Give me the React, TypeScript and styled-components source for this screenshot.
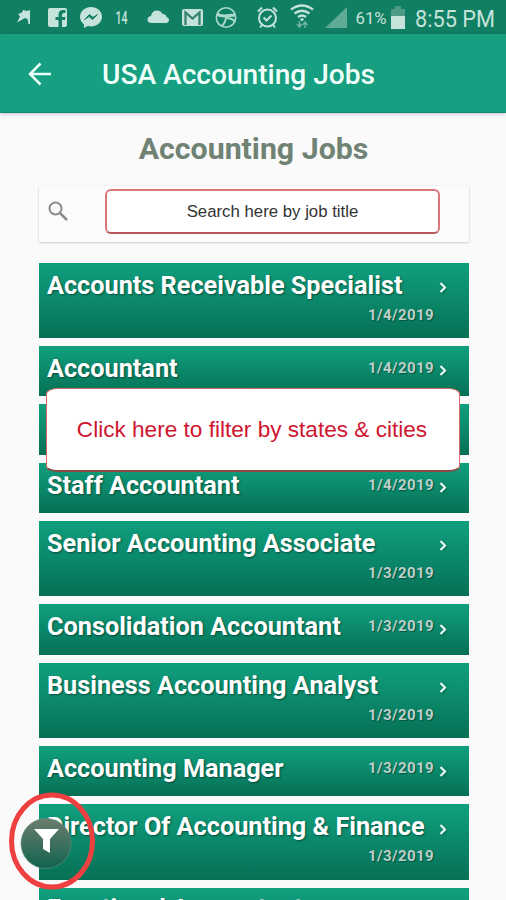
import React from "react";
import styled, { createGlobalStyle } from "styled-components";

const Global = createGlobalStyle`
  * { box-sizing: border-box; }
  html, body { margin: 0; padding: 0; overflow: hidden; background: #fafafa; }
  body { font-family: Roboto, "Liberation Sans", sans-serif; }
`;

const Screen = styled.div`
  position: relative;
  width: 506px;
  height: 900px;
  overflow: hidden;
  background: #fafafa;
`;

const StatusBar = styled.div`
  height: 34px;
  background: #107f63;
  color: #c5e3da;
`;

const StatusArt = styled.svg`
  display: block;
  width: 506px;
  height: 34px;
`;

const AppBar = styled.header`
  height: 79px;
  display: flex;
  align-items: center;
  padding-left: 28px;
  background: #169f80;
  border-bottom: 1px solid #128a6e;
  box-shadow: 0 1px 4px rgba(60, 40, 70, 0.25);
`;

const BackIcon = styled.svg`
  width: 24px;
  height: 24px;
  margin-top: 1px;
`;

const BarTitle = styled.h1`
  margin: 4px 0 0 50px;
  font-size: 28.1px;
  font-weight: 500;
  line-height: 32px;
  color: #f0fffb;
  white-space: nowrap;
`;

const Heading = styled.h2`
  margin: 20px 0 0;
  height: 32px;
  padding-left: 1px;
  text-align: center;
  font-size: 30.3px;
  font-weight: 700;
  line-height: 32px;
  color: #6f8273;
`;

const SearchBox = styled.div`
  width: 430px;
  height: 56px;
  margin: 21px 0 0 39px;
  padding: 3px 0 0 8px;
  display: flex;
  background: #fbfbfb;
  box-shadow: 0 1px 2px rgba(0, 0, 0, 0.16), 0 0 1px rgba(0, 0, 0, 0.12);
`;

const SearchIcon = styled.svg`
  width: 23px;
  height: 23px;
  margin-top: 11px;
`;

const SearchHint = styled.div`
  width: 335px;
  height: 45px;
  margin-left: 35px;
  border: 2px solid #d9777a;
  border-bottom: 2px solid #b5565b;
  border-radius: 6px;
  background: #fff;
  color: #333;
  font-family: "Liberation Sans", sans-serif;
  font-size: 16.8px;
  line-height: 42px;
  text-align: center;
`;

const List = styled.div`
  display: flex;
  flex-direction: column;
  gap: 8px;
  margin: 20.6px 0 0 39px;
  width: 430px;
`;

const Row = styled.div<{ $tall?: boolean }>`
  flex: none;
  height: ${(p) => (p.$tall ? 75.35 : 50.35)}px;
  padding: 7px 19px 0 8px;
  display: grid;
  grid-template-columns: minmax(0, 1fr) 70px 14px;
  column-gap: 2px;
  grid-template-rows: ${(p) => (p.$tall ? "31px 29px" : "31px")};
  background: linear-gradient(#10a07e, #067056);

  &:last-child {
    padding-top: 5px;
  }
`;

const JobTitle = styled.div<{ $tall?: boolean }>`
  grid-column: 1 / ${(p) => (p.$tall ? 3 : 2)};
  grid-row: 1;
  font-size: 25.25px;
  font-weight: 700;
  line-height: 32px;
  white-space: nowrap;
  color: #fff;
  text-shadow: 1px 1px 2px rgba(0, 40, 30, 0.6);
`;

const JobDate = styled.div<{ $tall?: boolean }>`
  grid-column: 2;
  grid-row: ${(p) => (p.$tall ? 2 : 1)};
  font-size: 15px;
  font-weight: 700;
  line-height: ${(p) => (p.$tall ? 29 : 31)}px;
  letter-spacing: 0.4px;
  text-align: right;
  white-space: nowrap;
  color: #bdd0c9;
  text-shadow: 1px 1px 1px rgba(0, 50, 40, 0.6);
`;

const Chevron = styled.svg`
  grid-column: 3;
  grid-row: 1;
  width: 14px;
  height: 14px;
  margin-top: 10.5px;
  filter: drop-shadow(1px 1px 1px rgba(0, 50, 40, 0.4));
`;

const FilterHint = styled.div`
  position: absolute;
  left: 46px;
  top: 388px;
  width: 414px;
  height: 84px;
  border: 1.5px solid #d86a66;
  border-bottom: 2px solid #8d4a42;
  border-radius: 12px / 6px;
  background: #fff;
  color: #cf1630;
  font-family: "Liberation Sans", sans-serif;
  font-size: 22.6px;
  line-height: 81px;
  text-align: center;
  text-indent: -2px;
  white-space: nowrap;
`;

const FilterArt = styled.svg`
  position: absolute;
  left: 4px;
  top: 785px;
  width: 100px;
  height: 110px;
`;

type Job = { title?: string; date?: string; tall?: boolean };

const jobs: Job[] = [
  { title: "Accounts Receivable Specialist", date: "1/4/2019", tall: true },
  { title: "Accountant", date: "1/4/2019" },
  {},
  { title: "Staff Accountant", date: "1/4/2019" },
  { title: "Senior Accounting Associate", date: "1/3/2019", tall: true },
  { title: "Consolidation Accountant", date: "1/3/2019" },
  { title: "Business Accounting Analyst", date: "1/3/2019", tall: true },
  { title: "Accounting Manager", date: "1/3/2019" },
  { title: "Director Of Accounting & Finance", date: "1/3/2019", tall: true },
  { title: "Functional Accountant", tall: true },
];

const StatusIcons = () => (
  <StatusArt viewBox="0 0 506 34" fill="#c5e3da">
    <path d="M18 14l4-1.500 1-2.500 4 1 3-1v14h-1.500l-1-5-2.500-1-8 4.500 3-6z" />
    <path d="M50 8h15q2 0 2 2v15q0 2-2 2h-3v-7h3l.5-3H62v-2q0-2 2-2h1.500v-3H63q-4.500 0-4.500 4.500V17h-3v3h3v7H50q-2 0-2-2V10q0-2 2-2z" />
    <path d="M91 7c-6 0-11 4.300-11 9.800 0 3.200 1.500 5.800 4 7.600V28l3.800-2c1 .3 2.100.4 3.200.4 6 0 11-4.200 11-9.700S97 7 91 7z" />
    <path d="M84.500 19.500l5-5 3.500 3 4.500-3-5 5-3.500-3z" fill="#107f63" stroke="#107f63" />
    <text x="115.500" y="24" fontSize="18" fontWeight="500" textLength="12" lengthAdjust="spacingAndGlyphs" fontFamily="Roboto">14</text>
    <path d="M152 23q-4.500 0-4.500-3.500 0-3 3.500-3.500 1-5.500 6-5.500 4 0 5.500 3.500 3.500 0 4 3 2.500.5 2.500 3t-3 3z" />
    <rect x="182" y="9" width="21" height="17" rx="2" />
    <path d="M185.500 25V12.500l7 6 7-6V25" fill="none" stroke="#34836f" strokeWidth="2.300" />
    <g fill="none" stroke="#a9d9ca" strokeWidth="1.600">
      <circle cx="226" cy="17.500" r="9.700" />
      <path d="M217 14c5 4 12 1 18 1" strokeWidth="3" />
      <path d="M226 16c0 4-1 7-4 10M226 18c4 0 7 1 9 4" strokeWidth="2" />
    </g>
    <g fill="none" stroke="#c5e3da" strokeWidth="2">
      <circle cx="267.500" cy="18" r="8.500" />
      <path d="M258 11.500l4-4M277 11.500l-4-4M262 25l-2 2.500M273 25l2 2.500M263.500 17.500l3 3 5-5" />
      <path d="M291 9.500q11-8 22 0M294.500 13.500q7.500-5.500 15 0M298 17q4-3 8 0" strokeWidth="2.300" />
    </g>
    <circle cx="302" cy="19.500" r="1.600" />
    <path d="M299.500 21v6M297 24l2.500 3 2-3M305 28v-6M302.500 25l2.500-3 2.500 3" fill="none" stroke="#75b5a2" strokeWidth="1.400" />
    <path d="M347 7v21h-22z" fill="#60ab95" />
    <text x="355.500" y="24" fontSize="16.500" textLength="31" lengthAdjust="spacingAndGlyphs" fontFamily="Roboto">61%</text>
    <path d="M395 6h6v3h4v8h-14V9h4z" fill="#4c9b84" />
    <path d="M391 16h14v13h-14z" />
    <text x="415" y="26.500" fontSize="24" textLength="80" lengthAdjust="spacingAndGlyphs" fontFamily="Roboto">8:55 PM</text>
  </StatusArt>
);

const FilterButton = () => (
  <FilterArt viewBox="4 785 100 110">
    <defs>
      <linearGradient id="fab" x1="0" y1="0" x2="0" y2="1">
        <stop offset="0" stopColor="#6b7d6d" />
        <stop offset="1" stopColor="#126350" />
      </linearGradient>
    </defs>
    <circle cx="46" cy="843.500" r="25" fill="url(#fab)" stroke="#64897a" strokeWidth="0.700" />
    <path d="M34 829h25l-9 10v14l-7-4v-10z" fill="#fff" />
    <ellipse cx="52" cy="841" rx="40.500" ry="46" fill="none" stroke="#ee4040" strokeWidth="5" />
  </FilterArt>
);

export default function App() {
  return (
    <Screen>
      <Global />
      <StatusBar>
        <StatusIcons />
      </StatusBar>
      <AppBar>
        <BackIcon viewBox="0 0 24 24" fill="none" stroke="#eafff9" strokeWidth="2.500">
          <path d="M23 12H2.500M12.500 1.500L2 12l10.500 10.500" />
        </BackIcon>
        <BarTitle>USA Accounting Jobs</BarTitle>
      </AppBar>
      <Heading>Accounting Jobs</Heading>
      <SearchBox>
        <SearchIcon viewBox="0 0 23 23" fill="none" stroke="#8c8c8c" strokeWidth="2">
          <circle cx="8.500" cy="8.500" r="6" />
          <path d="M13 13l7 7" strokeWidth="2.500" />
        </SearchIcon>
        <SearchHint>Search here by job title</SearchHint>
      </SearchBox>
      <List>
        {jobs.map((job, i) => (
          <Row key={i} $tall={job.tall}>
            {job.title && <JobTitle $tall={job.tall}>{job.title}</JobTitle>}
            {job.date && <JobDate $tall={job.tall}>{job.date}</JobDate>}
            {job.date && (
              <Chevron viewBox="0 0 14 14" fill="none" stroke="#e6f6f1" strokeWidth="2.200">
                <path d="M4.500 3L9 7.500 4.500 12" />
              </Chevron>
            )}
          </Row>
        ))}
      </List>
      <FilterHint>Click here to filter by states &amp; cities</FilterHint>
      <FilterButton />
    </Screen>
  );
}
